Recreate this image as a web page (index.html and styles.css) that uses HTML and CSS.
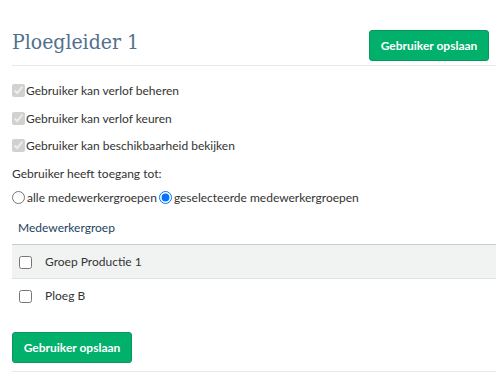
FILE: index.html
```html
<!DOCTYPE html>
<html>
<head>
<meta charset="utf-8">
<link rel="stylesheet" href="styles.css">
</head>
<body>
<div class="page">
  <div class="header">
    <h1 class="title">Ploegleider 1</h1>
    <button class="btn">Gebruiker opslaan</button>
  </div>
  <div class="perms">
    <label class="check-row"><input type="checkbox" checked disabled><span>Gebruiker kan verlof beheren</span></label>
    <label class="check-row"><input type="checkbox" checked disabled><span>Gebruiker kan verlof keuren</span></label>
    <label class="check-row"><input type="checkbox" checked disabled><span>Gebruiker kan beschikbaarheid bekijken</span></label>
    <div class="access-label">Gebruiker heeft toegang tot:</div>
    <div class="radio-row">
      <input type="radio" name="access"><span>alle medewerkergroepen</span>
      <input type="radio" name="access" checked><span>geselecteerde medewerkergroepen</span>
    </div>
  </div>
  <table class="groups">
    <thead>
      <tr><th colspan="2">Medewerkergroep</th></tr>
    </thead>
    <tbody>
      <tr class="odd"><td class="cb"><input type="checkbox"></td><td>Groep Productie 1</td></tr>
      <tr class="last"><td class="cb"><input type="checkbox"></td><td>Ploeg B</td></tr>
    </tbody>
  </table>
  <div class="footer">
    <button class="btn">Gebruiker opslaan</button>
  </div>
</div>
</body>
</html>
```
FILE: styles.css
```css
* { box-sizing: border-box; }
body {
  margin: 0;
  font-family: Lato, "Open Sans", sans-serif;
  font-size: 12px;
  color: #333;
  background: #fff;
}
.page {
  padding: 0 8px 0 12px;
}
.header {
  display: flex;
  justify-content: space-between;
  align-items: flex-end;
  padding-top: 29px;
  padding-bottom: 4px;
  border-bottom: 1px solid #e8e8e8;
}
.title {
  margin: 0 0 6px 0;
  font-family: "DejaVu Serif Condensed", "DejaVu Serif", serif;
  font-weight: normal;
  font-size: 21px;
  line-height: 26px;
  color: #52708e;
}
.btn {
  height: 31px;
  width: 120px;
  padding: 0;
  margin-right: 7px;
  background: #00b06b;
  border: 1px solid #07985d;
  border-radius: 3px;
  color: #fff;
  font-family: Lato, sans-serif;
  font-weight: bold;
  font-size: 12px;
  white-space: nowrap;
}
.perms {
  padding-top: 11px;
}
.check-row {
  display: flex;
  align-items: center;
  height: 27.5px;
}
.check-row input {
  margin: 0 1px 0 0;
  width: 13px;
  height: 13px;
}
.access-label {
  display: flex;
  align-items: center;
  height: 27px;
}
.radio-row {
  display: flex;
  align-items: center;
  height: 21px;
}
.radio-row input {
  margin: 0 2px 0 0;
  width: 13px;
  height: 13px;
}
.radio-row span + input {
  margin-left: 2px;
}
.groups {
  width: 100%;
  border-collapse: collapse;
  margin-top: 4px;
}
.groups th {
  text-align: left;
  font-weight: normal;
  color: #24425f;
  height: 33px;
  padding: 0 6px;
  border-bottom: 1px solid #c8cdd0;
}
.groups td {
  height: 34px;
  padding: 0;
  border-bottom: 1px solid #dde2e4;
}
.groups tr.last td {
  border-bottom: none;
}
.groups tr.odd td {
  background: #f1f3f3;
}
.groups td.cb {
  width: 33px;
  padding-left: 7px;
}
.groups td.cb input {
  margin: 0;
  width: 13px;
  height: 13px;
  vertical-align: middle;
}
.footer {
  padding-top: 19px;
  padding-bottom: 8px;
  border-bottom: 1px solid #e8e8e8;
}
.footer .btn {
  margin: 0;
}
```
